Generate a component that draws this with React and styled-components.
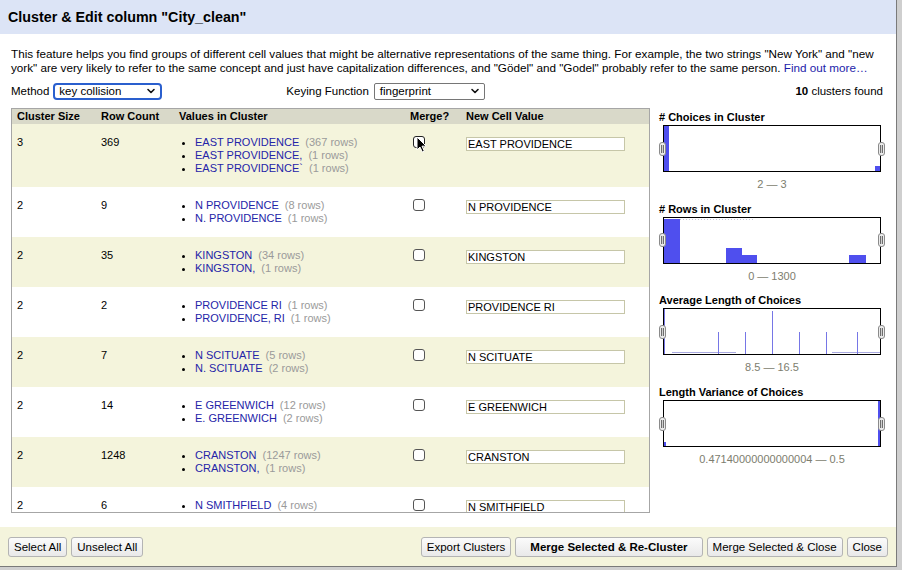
import React from 'react';
import styled, { createGlobalStyle } from 'styled-components';
import { ChevronDown } from 'lucide-react';

const GlobalStyle = createGlobalStyle`
  html, body {
    margin: 0;
    padding: 0;
  }
  body {
    background: #cfcfcf;
    font-family: "Liberation Sans", Arial, sans-serif;
    color: #000;
  }
`;

const Dialog = styled.div`
  width: 896px;
  height: 566px;
  border-right: 1px solid #7a7a7a;
  border-bottom: 1px solid #7a7a7a;
  background: #fff;
  display: flex;
  flex-direction: column;
  overflow: hidden;
`;

const Header = styled.div`
  height: 34px;
  flex: none;
  background: #dce4f6;
  padding-left: 8px;
  display: flex;
  align-items: center;
  font-size: 14.3px;
  font-weight: bold;
`;

const Body = styled.div`
  flex: 1;
  padding: 13px 13px 14px 11px;
  display: flex;
  flex-direction: column;
`;

const Description = styled.p`
  margin: 0;
  font-size: 11.7px;
  line-height: 14px;
  white-space: nowrap;

  a {
    color: #1d1daa;
    text-decoration: none;
  }
`;

const Controls = styled.div`
  margin-top: 7px;
  height: 18px;
  display: flex;
  align-items: center;
  font-size: 11.5px;
`;

const Group = styled.div`
  display: flex;
  align-items: center;
  gap: ${p => p.gap || 4}px;
  margin-left: ${p => p.offset || 0}px;
`;

const Found = styled.div`
  margin-left: auto;
  b { font-weight: bold; }
`;

const SelectBox = styled.div`
  box-sizing: border-box;
  width: ${p => p.w}px;
  height: 17px;
  display: flex;
  align-items: center;
  justify-content: space-between;
  padding: 0 3px 0 ${p => (p.focused ? 4 : 5)}px;
  background: #fff;
  border: ${p => (p.focused ? '2px solid #2a5fce' : '1px solid #767676')};
  border-radius: ${p => (p.focused ? 4 : 2)}px;
  font-size: 11.5px;
`;

const Main = styled.div`
  margin-top: 8px;
  height: 405px;
  display: flex;
  gap: 9px;
`;

const TableWrap = styled.div`
  box-sizing: border-box;
  width: 639px;
  height: 405px;
  flex: none;
  border: 1px solid #a6a6a6;
  overflow: hidden;
`;

const Table = styled.table`
  width: 637px;
  table-layout: fixed;
  border-collapse: collapse;
  font-size: 11px;
`;

const Th = styled.th`
  height: 15px;
  padding: 0 6px 0 ${p => p.pl || 6}px;
  background: #d9d9c9;
  text-align: left;
  font-weight: bold;
  line-height: 15px;
  white-space: nowrap;
`;

const Tr = styled.tr`
  background: ${p => (p.odd ? '#f4f4dc' : '#fff')};
`;

const Td = styled.td`
  vertical-align: top;
  padding: 12px 6px 12px ${p => p.pl || 6}px;
  line-height: 13px;
  position: relative;
`;

const Values = styled.ul`
  margin: 0;
  padding-left: 16px;
  list-style: disc;
`;

const Value = styled.li`
  white-space: nowrap;
`;

const ValueName = styled.span`
  color: #2424a8;
`;

const ValueCount = styled.span`
  color: #9a9a9a;
  margin-left: 6px;
`;

const Check = styled.input`
  appearance: none;
  display: block;
  box-sizing: border-box;
  width: 12px;
  height: 12px;
  margin: 0 0 0 3px;
  border: 1px solid ${p => (p.hover ? '#222' : '#555')};
  border-radius: 3px;
  background: #fff;
`;

const CellInput = styled.input`
  display: block;
  box-sizing: border-box;
  width: 159px;
  height: 14px;
  margin: 1px 0 0;
  padding: 0 1px;
  border: 1px solid #c6c6a8;
  font-family: "Liberation Sans", Arial, sans-serif;
  font-size: 11px;
  color: #000;
  background: #fff;
`;

const Cursor = styled.svg`
  position: absolute;
  left: 12px;
  top: 12px;
`;

const Side = styled.div`
  width: 224px;
  display: flex;
  flex-direction: column;
`;

const Facet = styled.div`
  padding-top: 3px;
  margin-bottom: 8.7px;
`;

const FacetTitle = styled.div`
  font-size: 11px;
  font-weight: bold;
  line-height: 13px;
  white-space: nowrap;
`;

const ChartBox = styled.div`
  position: relative;
  width: 216px;
  height: 45px;
  margin: 1px 0 0 4px;
  border: 1px solid #000;
  background: #fff;

  svg.chart {
    display: block;
  }
`;

const Handle = styled.div`
  position: absolute;
  top: 50%;
  ${p => (p.side === 'left' ? 'left: -5px;' : 'right: -5px;')}
  transform: translateY(-50%);
  box-sizing: border-box;
  width: 7px;
  height: 14px;
  padding: 2px 1px;
  border: 1px solid #8a8a8a;
  border-radius: 3px;
  background: repeating-linear-gradient(to right, #6e6e6e 0 1px, #cfcfcf 1px 2px) content-box, #ececec;
`;

const Range = styled.div`
  width: 218px;
  margin: 6px 0 0 4px;
  text-align: center;
  font-size: 11px;
  line-height: 13px;
  color: #7d7d6e;
  white-space: nowrap;
`;

const Footer = styled.div`
  height: 39px;
  flex: none;
  background: #f4f4dc;
  padding: 0 8px;
  display: flex;
  align-items: center;
  gap: 4px;
`;

const Spacer = styled.div`
  flex: 1;
`;

const Button = styled.button`
  height: 20px;
  padding: 0 ${p => (p.primary ? 14 : 5)}px;
  border: 1px solid #b4b4b4;
  border-radius: 3px;
  background: linear-gradient(#fbfbfb, #e9e9e9);
  font-family: "Liberation Sans", Arial, sans-serif;
  font-size: 11.5px;
  font-weight: ${p => (p.primary ? 'bold' : 'normal')};
  color: #000;
  white-space: nowrap;
`;

const clusters = [
  { size: 3, count: 369, values: [['EAST PROVIDENCE', 367], ['EAST PROVIDENCE,', 1], ['EAST PROVIDENCE`', 1]], value: 'EAST PROVIDENCE' },
  { size: 2, count: 9, values: [['N PROVIDENCE', 8], ['N. PROVIDENCE', 1]], value: 'N PROVIDENCE' },
  { size: 2, count: 35, values: [['KINGSTON', 34], ['KINGSTON,', 1]], value: 'KINGSTON' },
  { size: 2, count: 2, values: [['PROVIDENCE RI', 1], ['PROVIDENCE, RI', 1]], value: 'PROVIDENCE RI' },
  { size: 2, count: 7, values: [['N SCITUATE', 5], ['N. SCITUATE', 2]], value: 'N SCITUATE' },
  { size: 2, count: 14, values: [['E GREENWICH', 12], ['E. GREENWICH', 2]], value: 'E GREENWICH' },
  { size: 2, count: 1248, values: [['CRANSTON', 1247], ['CRANSTON,', 1]], value: 'CRANSTON' },
  { size: 2, count: 6, values: [['N SMITHFIELD', 4]], value: 'N SMITHFIELD' },
];

const BAR = '#4f4fee';
const LINE = '#7676e6';

function ChoicesChart() {
  return (
    <svg className="chart" width="216" height="45">
      <rect x="0" y="0" width="5" height="45" fill={BAR} />
      <rect x="211" y="40" width="5" height="5" fill={BAR} />
    </svg>
  );
}

function RowsChart() {
  return (
    <svg className="chart" width="216" height="45">
      <line x1="16" y1="1.5" x2="90" y2="1.5" stroke="#c8c8d8" strokeDasharray="1 2" />
      <rect x="0" y="1" width="16" height="44" fill={BAR} />
      <rect x="62" y="30" width="16" height="15" fill={BAR} />
      <rect x="78" y="37" width="15" height="8" fill={BAR} />
      <rect x="185" y="37" width="17" height="8" fill={BAR} />
    </svg>
  );
}

function LengthChart() {
  const half = [54, 81, 135, 162, 193];
  return (
    <svg className="chart" width="216" height="45">
      <line x1="8" y1="43.5" x2="72" y2="43.5" stroke="#a9a9e0" />
      <line x1="168" y1="43.5" x2="216" y2="43.5" stroke="#a9a9e0" />
      <line x1="0.5" y1="0" x2="0.5" y2="45" stroke={LINE} />
      {half.map(x => (
        <line key={x} x1={x + 0.5} y1="23" x2={x + 0.5} y2="45" stroke={LINE} />
      ))}
      <line x1="108.5" y1="2" x2="108.5" y2="45" stroke={LINE} />
    </svg>
  );
}

function VarianceChart() {
  return (
    <svg className="chart" width="216" height="45">
      <rect x="0" y="41" width="2" height="4" fill={BAR} />
      <rect x="214" y="0" width="2" height="45" fill={BAR} />
    </svg>
  );
}

const facets = [
  { title: '# Choices in Cluster', range: '2 \u2014 3', Chart: ChoicesChart },
  { title: '# Rows in Cluster', range: '0 \u2014 1300', Chart: RowsChart },
  { title: 'Average Length of Choices', range: '8.5 \u2014 16.5', Chart: LengthChart },
  { title: 'Length Variance of Choices', range: '0.47140000000000004 \u2014 0.5', Chart: VarianceChart },
];

function Select({ w, focused, children }) {
  return (
    <SelectBox w={w} focused={focused}>
      <span>{children}</span>
      <ChevronDown size={12} strokeWidth={3.2} color="#111" />
    </SelectBox>
  );
}

export default function App() {
  return (
    <>
      <GlobalStyle />
      <Dialog>
        <Header>Cluster &amp; Edit column "City_clean"</Header>
        <Body>
          <Description>
            This feature helps you find groups of different cell values that might be alternative representations of the same thing. For example, the two strings "New York" and "new
            <br />
            york" are very likely to refer to the same concept and just have capitalization differences, and "Gödel" and "Godel" probably refer to the same person. <a href="#">Find out more…</a>
          </Description>
          <Controls>
            <Group>
              <span>Method</span>
              <Select w={109} focused>key collision</Select>
            </Group>
            <Group offset={124} gap={5}>
              <span>Keying Function</span>
              <Select w={111}>fingerprint</Select>
            </Group>
            <Found><b>10</b> clusters found</Found>
          </Controls>
          <Main>
            <TableWrap>
              <Table>
                <colgroup>
                  <col style={{ width: 83 }} />
                  <col style={{ width: 78 }} />
                  <col style={{ width: 231 }} />
                  <col style={{ width: 56 }} />
                  <col style={{ width: 189 }} />
                </colgroup>
                <thead>
                  <tr>
                    <Th pl={5}>Cluster Size</Th>
                    <Th>Row Count</Th>
                    <Th>Values in Cluster</Th>
                    <Th>Merge?</Th>
                    <Th>New Cell Value</Th>
                  </tr>
                </thead>
                <tbody>
                  {clusters.map((c, i) => (
                    <Tr key={c.value} odd={i % 2 === 0}>
                      <Td pl={5}>{c.size}</Td>
                      <Td>{c.count}</Td>
                      <Td>
                        <Values>
                          {c.values.map(([name, rows]) => (
                            <Value key={name}>
                              <ValueName>{name}</ValueName>
                              <ValueCount>({rows} rows)</ValueCount>
                            </Value>
                          ))}
                        </Values>
                      </Td>
                      <Td>
                        <Check type="checkbox" hover={i === 0} readOnly />
                        {i === 0 && (
                          <Cursor width="12" height="17" viewBox="0 0 12 17">
                            <path d="M1 1 L1 14 L4 11 L6.3 16 L8.3 15.1 L6 10.2 L10.2 10.2 Z" fill="#000" stroke="#fff" strokeWidth="1" strokeLinejoin="round" />
                          </Cursor>
                        )}
                      </Td>
                      <Td>
                        <CellInput defaultValue={c.value} />
                      </Td>
                    </Tr>
                  ))}
                </tbody>
              </Table>
            </TableWrap>
            <Side>
              {facets.map(({ title, range, Chart }) => (
                <Facet key={title}>
                  <FacetTitle>{title}</FacetTitle>
                  <ChartBox>
                    <Chart />
                    <Handle side="left" />
                    <Handle side="right" />
                  </ChartBox>
                  <Range>{range}</Range>
                </Facet>
              ))}
            </Side>
          </Main>
        </Body>
        <Footer>
          <Button>Select All</Button>
          <Button>Unselect All</Button>
          <Spacer />
          <Button>Export Clusters</Button>
          <Button primary>Merge Selected &amp; Re-Cluster</Button>
          <Button>Merge Selected &amp; Close</Button>
          <Button>Close</Button>
        </Footer>
      </Dialog>
    </>
  );
}
